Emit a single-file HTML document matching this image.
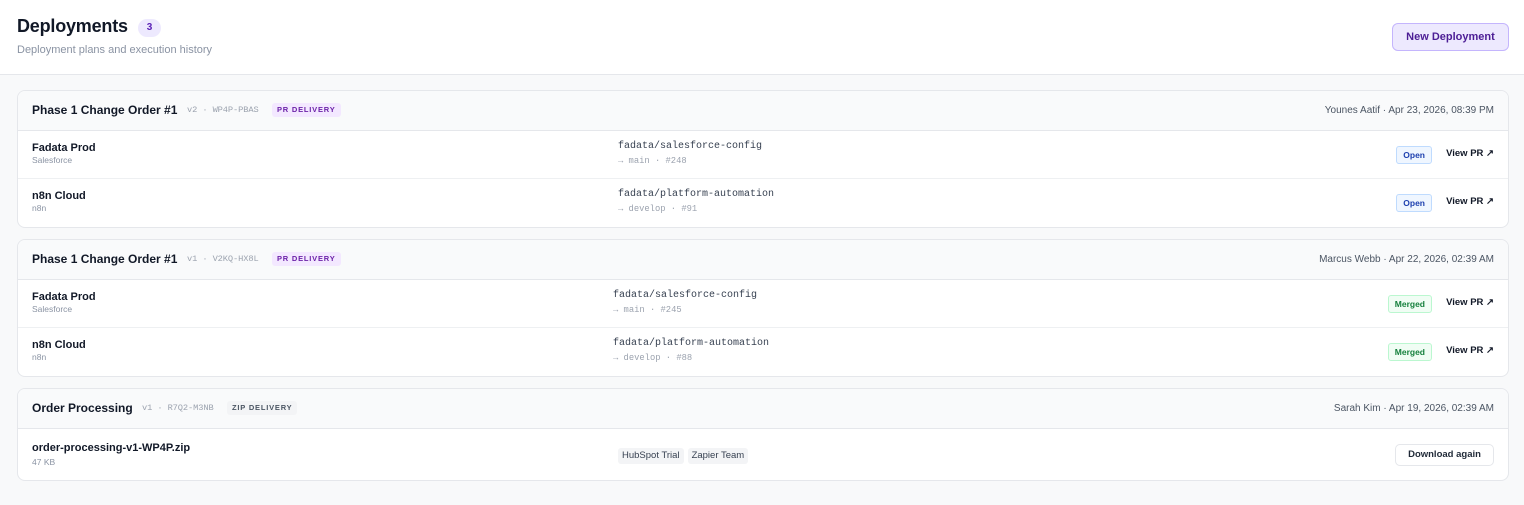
<!DOCTYPE html>
<html><head><meta charset="utf-8"><style>
*{box-sizing:border-box;margin:0;padding:0}
body{width:1524px;height:505px;overflow:hidden;background:#f8f9fa;font-family:"Liberation Sans",sans-serif;color:#111827;position:relative}
.hdr{position:absolute;left:0;top:0;width:1524px;height:75px;background:#fff;border-bottom:1px solid #e5e7eb}
h1{position:absolute;left:17px;top:16px;font-size:18px;font-weight:700;letter-spacing:-0.2px}
.cnt{position:absolute;left:138px;top:19px;width:23px;height:18px;border-radius:9px;background:#ede9fe;color:#5b21b6;font-size:10px;font-weight:700;text-align:center;line-height:18px}
.sub{position:absolute;left:17px;top:44px;font-size:11px;color:#8a93a3}
.nd{position:absolute;left:1392px;top:23px;width:117px;height:28px;border:1px solid #c4b5fd;background:#ede9fe;border-radius:6px;color:#4c1d95;font-size:11px;font-weight:700;text-align:center;line-height:26px}
.card{position:absolute;left:17px;width:1492px;background:#fff;border:1px solid #e5e7eb;border-radius:8px;overflow:hidden}
.ch{position:relative;height:40px;background:#f9fafb;border-bottom:1px solid #e5e7eb}
.ct{position:absolute;left:14px;top:12px;font-size:12px;font-weight:700}
.ver{position:absolute;top:14px;font-size:8.7px;color:#9ca3af;font-family:"Liberation Mono",monospace;letter-spacing:-0.1px}
.tag{position:absolute;top:12px;height:14px;padding:0 5px;border-radius:3px;font-size:7.5px;font-weight:700;letter-spacing:0.8px;line-height:14px}
.pr{background:#f3e8ff;color:#6b21a8}
.zip{background:#f3f4f6;color:#4b5563}
.meta{position:absolute;right:14px;top:14px;font-size:10px;color:#4b5563}
.row{position:relative;height:48px;border-bottom:1px solid #eef0f2}
.row:last-child{border-bottom:none}
.n{position:absolute;left:14px;top:11px;font-size:11px;font-weight:700}
.s{position:absolute;left:14px;top:24px;font-size:8.5px;color:#8a93a3}
.rp{position:absolute;top:10px;font-family:"Liberation Mono",monospace;font-size:10px;color:#374151}
.br{position:absolute;top:25px;font-family:"Liberation Mono",monospace;font-size:8.8px;color:#9ca3af}
.b{position:absolute;right:76px;top:15px;height:18px;padding:0 6px;border-radius:3px;font-size:8.5px;font-weight:700;line-height:16px}
.op{background:#eff6ff;border:1px solid #bfdbfe;color:#1e40af}
.mg{background:#f0fdf4;border:1px solid #bbf7d0;color:#15803d}
.vp{position:absolute;right:14px;top:17px;font-size:9.5px;font-weight:700}
.chip{display:inline-block;height:16px;padding:0 4px;background:#f3f4f6;border-radius:3px;font-size:9.5px;color:#374151;line-height:16px;margin-right:4px}
.dl{position:absolute;right:14px;top:15px;width:99px;height:22px;border:1px solid #e5e7eb;border-radius:5px;font-size:9.5px;font-weight:700;text-align:center;line-height:20px;color:#1f2937}
</style></head><body>
<div class="hdr">
<h1>Deployments</h1><div class="cnt">3</div>
<div class="sub">Deployment plans and execution history</div>
<div class="nd">New Deployment</div>
</div>

<div class="card" style="top:90px;height:138px">
<div class="ch"><div class="ct">Phase 1 Change Order #1</div><div class="ver" style="left:169px">v2 · WP4P-PBAS</div><div class="tag pr" style="left:254px">PR DELIVERY</div><div class="meta">Younes Aatif · Apr 23, 2026, 08:39 PM</div></div>
<div class="row"><div class="n">Fadata Prod</div><div class="s">Salesforce</div><div class="rp" style="left:600px">fadata/salesforce-config</div><div class="br" style="left:600px">→ main · #248</div><div class="b op">Open</div><div class="vp">View PR ↗</div></div>
<div class="row"><div class="n">n8n Cloud</div><div class="s">n8n</div><div class="rp" style="left:600px">fadata/platform-automation</div><div class="br" style="left:600px">→ develop · #91</div><div class="b op">Open</div><div class="vp">View PR ↗</div></div>
</div>

<div class="card" style="top:239px;height:138px">
<div class="ch"><div class="ct">Phase 1 Change Order #1</div><div class="ver" style="left:169px">v1 · V2KQ-HX8L</div><div class="tag pr" style="left:254px">PR DELIVERY</div><div class="meta">Marcus Webb · Apr 22, 2026, 02:39 AM</div></div>
<div class="row"><div class="n">Fadata Prod</div><div class="s">Salesforce</div><div class="rp" style="left:595px">fadata/salesforce-config</div><div class="br" style="left:595px">→ main · #245</div><div class="b mg">Merged</div><div class="vp">View PR ↗</div></div>
<div class="row"><div class="n">n8n Cloud</div><div class="s">n8n</div><div class="rp" style="left:595px">fadata/platform-automation</div><div class="br" style="left:595px">→ develop · #88</div><div class="b mg">Merged</div><div class="vp">View PR ↗</div></div>
</div>

<div class="card" style="top:388px;height:93px">
<div class="ch"><div class="ct">Order Processing</div><div class="ver" style="left:124px">v1 · R7Q2-M3NB</div><div class="tag zip" style="left:209px">ZIP DELIVERY</div><div class="meta">Sarah Kim · Apr 19, 2026, 02:39 AM</div></div>
<div class="row" style="height:52px"><div class="n" style="top:13px">order-processing-v1-WP4P.zip</div><div class="s" style="top:28px">47 KB</div><div style="position:absolute;left:600px;top:16px"><span class="chip">HubSpot Trial</span><span class="chip">Zapier Team</span></div><div class="dl">Download again</div></div>
</div>
</body></html>
